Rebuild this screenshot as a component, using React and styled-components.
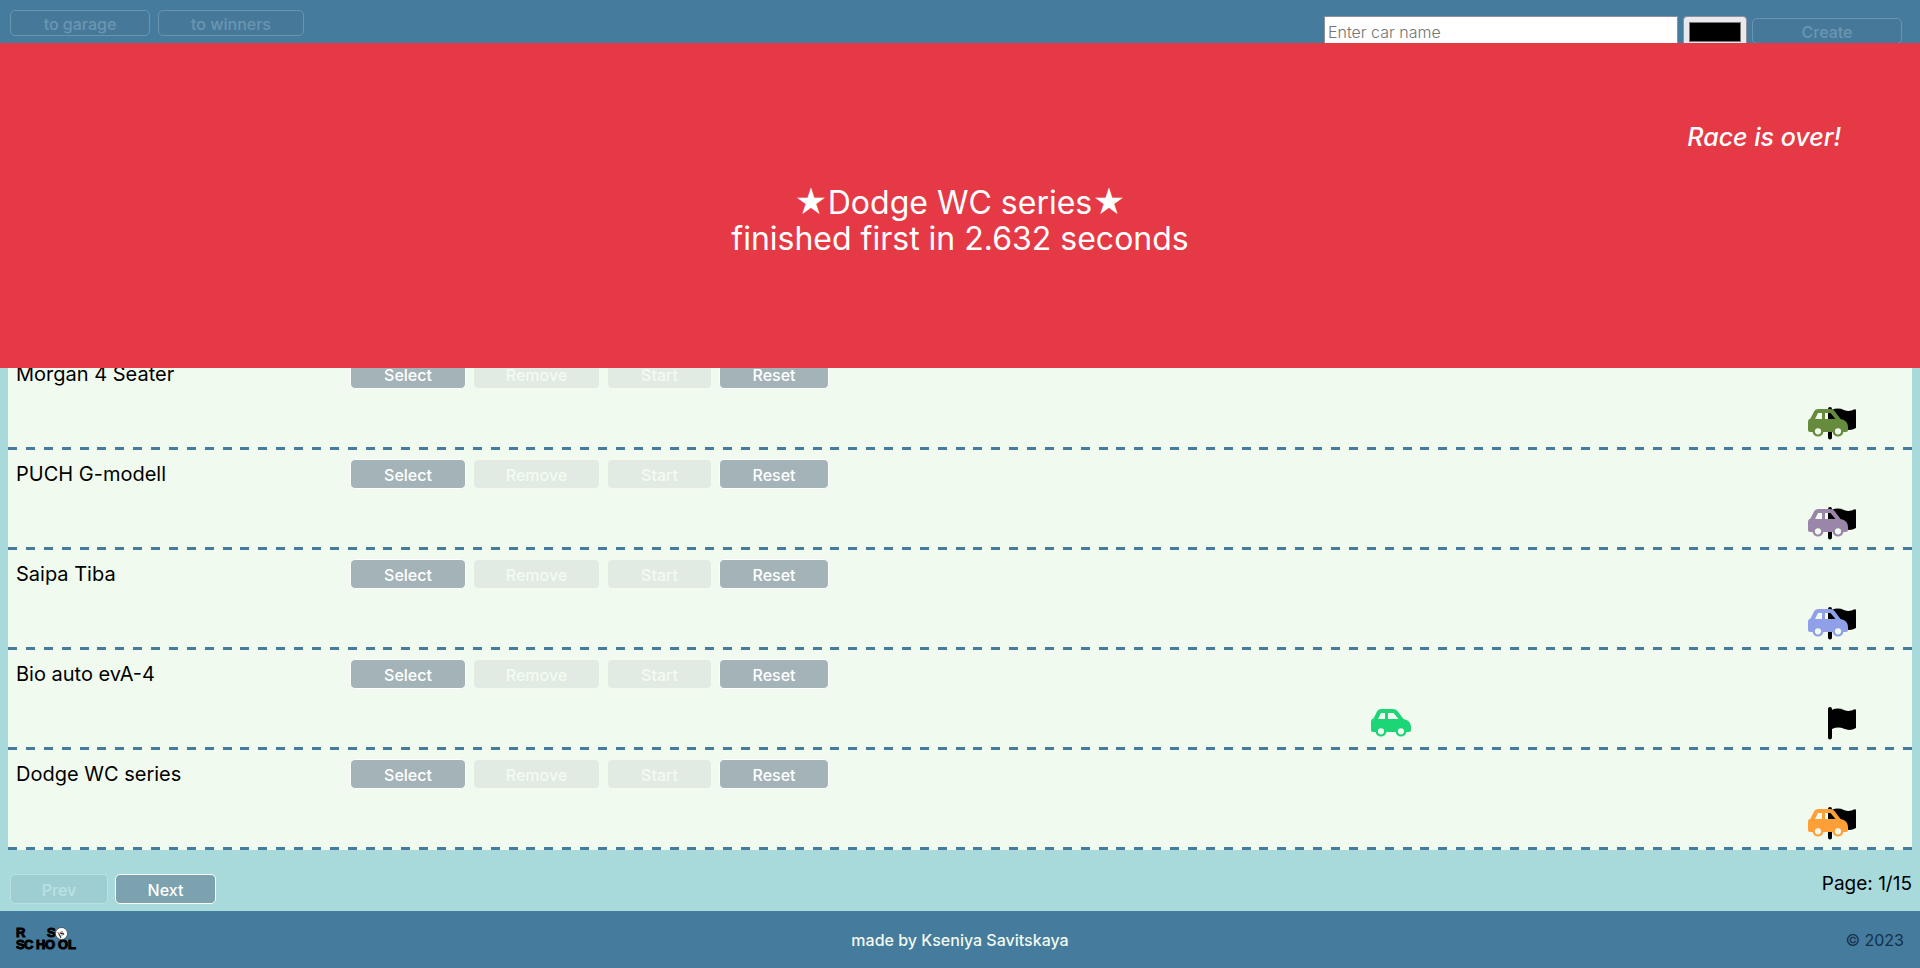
import React from "react";
import styled, { createGlobalStyle } from "styled-components";

const GlobalStyle = createGlobalStyle`
  * { box-sizing: border-box; }
  body {
    margin: 0;
    background: #a8dadc;
    color: #000;
    font-family: Inter, "Open Sans", sans-serif;
    font-size: 20px;
    line-height: 24px;
  }
  button, input { font-family: inherit; }
`;

const Page = styled.div`
  min-height: 100vh;
  display: flex;
  flex-direction: column;
`;

const Header = styled.header`
  min-height: 150px;
  padding: 10px 18px 10px 10px;
  display: flex;
  justify-content: space-between;
  align-items: flex-start;
  background: #457b9d;
`;

const Nav = styled.nav`
  display: flex;
  gap: 8px;
`;

const Button = styled.button`
  width: ${(p) => p.$width}px;
  height: ${(p) => p.$height || 30}px;
  padding: 1px 0 0;
  border: 1px solid #fff;
  border-radius: 5px;
  background: rgba(69, 93, 117, 0.45);
  color: #fff;
  font-size: 16px;
  font-weight: 500;
  line-height: 20px;
  &:disabled { opacity: 0.2; }
`;

const CreateForm = styled.form`
  padding-top: 6px;
  display: flex;
  align-items: flex-start;
  gap: 5px;
`;

const NameInput = styled.input`
  width: 354px;
  height: 32px;
  padding: 0 3px;
  border: 1px solid #8f8f9d;
  background: #fff;
  font-size: 16px;
  font-weight: 300;
  &::placeholder { color: #757575; }
`;

const ColorInput = styled.input`
  width: 64px;
  height: 32px;
  padding: 5px;
  border: 1px solid #8f8f9d;
  border-radius: 4px;
  background: #e9e9ed;
  &::-webkit-color-swatch-wrapper { padding: 0; }
  &::-webkit-color-swatch { border: 1px solid #777; }
`;

const CreateCell = styled.div`
  padding-top: 2px;
  display: flex;
`;

const Garage = styled.main`
  flex: 1;
  display: flex;
  flex-direction: column;
  justify-content: flex-end;
  padding: 0 8px;
`;

const Tracks = styled.ul`
  margin: 0;
  padding: 0;
  list-style: none;
  background: #f1faee;
`;

/* The dash period divides the row so that a dash sits at both ends. */
const Track = styled.li`
  height: 100px;
  padding-bottom: 3px;
  background: repeating-linear-gradient(
      90deg,
      #457b9d 0 9px,
      transparent 9px calc((100% + 9px) / 107)
    )
    left bottom / 100% 3px no-repeat;
  display: flex;
  flex-direction: column;
  justify-content: space-between;
`;

const Controls = styled.div`
  padding: 9px 8px 0;
  display: flex;
  align-items: center;
`;

const CarName = styled.span`
  width: 334px;
`;

const ButtonGroup = styled.div`
  display: flex;
  gap: 7px;
`;

const Lane = styled.div`
  position: relative;
  height: 40px;
  margin-right: 56px;
  display: flex;
  justify-content: flex-end;
`;

const CarSlot = styled.div`
  position: absolute;
  top: 2px;
  right: ${(p) => p.$fromEnd}px;
  height: 28px;
  color: ${(p) => p.$color};
  display: flex;
`;

const Pager = styled.div`
  padding: 16px 0 7px 2px;
  display: flex;
  justify-content: space-between;
  align-items: flex-start;
`;

const PagerButtons = styled.div`
  padding-top: 8px;
  display: flex;
  gap: 7px;
`;

const PageCount = styled.span`
  padding-top: 6px;
  font-size: 19px;
`;

const Footer = styled.footer`
  height: 57px;
  padding: 0 16px;
  display: grid;
  grid-template-columns: 1fr auto 1fr;
  align-items: center;
  background: #457b9d;
  font-size: 16px;
`;

const LogoLink = styled.a`
  display: flex;
`;

const AuthorLink = styled.a`
  color: #f1faee;
  font-weight: 500;
  text-decoration: none;
`;

const Copyright = styled.span`
  justify-self: end;
  color: #14304a;
`;

const Banner = styled.section`
  position: fixed;
  top: 43px;
  left: 0;
  right: 0;
  height: 325px;
  padding: 80px 79px 0;
  background: #e63946;
  color: #fff;
`;

const BannerNote = styled.p`
  margin: 0 0 34px;
  font-size: 25px;
  line-height: 28px;
  font-weight: 500;
  font-style: italic;
  text-align: right;
`;

const Winner = styled.p`
  margin: 0;
  font-size: 32px;
  line-height: 36px;
  text-align: center;
`;

const CarIcon = () => (
  <svg width="40" height="28" viewBox="0 0 40 28" fill="currentColor" fillRule="evenodd" aria-hidden="true">
    <path d="M10 0H22Q25 0 26.5 2L32.5 10Q40 11.500 40 18V21Q40 23 38 23H35.4A5.5 5.5 0 0 1 24.6 23H15.4A5.5 5.5 0 0 1 4.6 23H2Q0 23 0 21V13Q0 10 2.5 9.5L6 2.5Q7 0 10 0ZM10 4L7 10H14V4ZM17 4V10H27.5L22.5 4ZM10 19.2A3.1 3.1 0 1 0 10 25.4A3.1 3.1 0 1 0 10 19.2ZM30 19.2A3.1 3.1 0 1 0 30 25.4A3.1 3.1 0 1 0 30 19.2Z" />
  </svg>
);

const FlagIcon = () => (
  <svg width="28" height="33" viewBox="0 0 28 33" aria-hidden="true">
    <path d="M0 2Q0 0 2 0Q4 0 4 2V2.7C8 1.2 12 1.200 16 3C20 4.600 23 4 26.500 2.300Q28 2 28 3.500V21C24 23.300 20 23.500 16 21.800C12 20 8 20.300 4 22V30.500Q4 32.500 2 32.500Q0 32.500 0 30.500Z" />
  </svg>
);

const SchoolLogo = () => (
  <svg width="62" height="28" viewBox="0 0 62 28" role="img" aria-label="RS School">
    <g fontFamily="Liberation Sans, sans-serif" fontWeight="700" fontSize="13" stroke="#000" strokeWidth="1">
      <text x="0" y="11">R</text>
      <text x="31" y="11">S</text>
      <text x="0 8 20 29 42 52" y="22.500">SCHOOL</text>
    </g>
    <circle cx="45.500" cy="7.500" r="6" fill="#fff" stroke="#222" strokeWidth="0.6" />
    <text x="42" y="9.500" fontFamily="Liberation Sans, sans-serif" fontWeight="700" fontSize="7" transform="rotate(-30 45.500 7.500)">js</text>
  </svg>
);

const cars = [
  { name: "Morgan 4 Seater", color: "#668b3d", fromEnd: 8 },
  { name: "PUCH G-modell", color: "#9a86a8", fromEnd: 8 },
  { name: "Saipa Tiba", color: "#8fa0e8", fromEnd: 8 },
  { name: "Bio auto evA-4", color: "#1bd577", fromEnd: 445 },
  { name: "Dodge WC series", color: "#ff9f38", fromEnd: 8 },
];

export default function App() {
  return (
    <Page>
      <GlobalStyle />
      <Header>
        <Nav>
          <Button $width={140} $height={26} disabled>to garage</Button>
          <Button $width={146} $height={26} disabled>to winners</Button>
        </Nav>
        <CreateForm>
          <NameInput type="text" placeholder="Enter car name" aria-label="Car name" />
          <ColorInput type="color" defaultValue="#000000" aria-label="Car color" />
          <CreateCell>
            <Button $width={150} $height={26} disabled>Create</Button>
          </CreateCell>
        </CreateForm>
      </Header>
      <Garage>
        <Tracks>
          {cars.map((car) => (
            <Track key={car.name}>
              <Controls>
                <CarName>{car.name}</CarName>
                <ButtonGroup>
                  <Button $width={116}>Select</Button>
                  <Button $width={127} disabled>Remove</Button>
                  <Button $width={105} disabled>Start</Button>
                  <Button $width={110}>Reset</Button>
                </ButtonGroup>
              </Controls>
              <Lane>
                <FlagIcon />
                <CarSlot $color={car.color} $fromEnd={car.fromEnd}>
                  <CarIcon />
                </CarSlot>
              </Lane>
            </Track>
          ))}
        </Tracks>
        <Pager>
          <PagerButtons>
            <Button $width={98} disabled>Prev</Button>
            <Button $width={101}>Next</Button>
          </PagerButtons>
          <PageCount>Page: 1/15</PageCount>
        </Pager>
      </Garage>
      <Footer>
        <LogoLink href="#school"><SchoolLogo /></LogoLink>
        <AuthorLink href="#author">made by Kseniya Savitskaya</AuthorLink>
        <Copyright>© 2023</Copyright>
      </Footer>
      <Banner role="status">
        <BannerNote>Race is over!</BannerNote>
        <Winner>★Dodge WC series★<br />finished first in 2.632 seconds</Winner>
      </Banner>
    </Page>
  );
}
